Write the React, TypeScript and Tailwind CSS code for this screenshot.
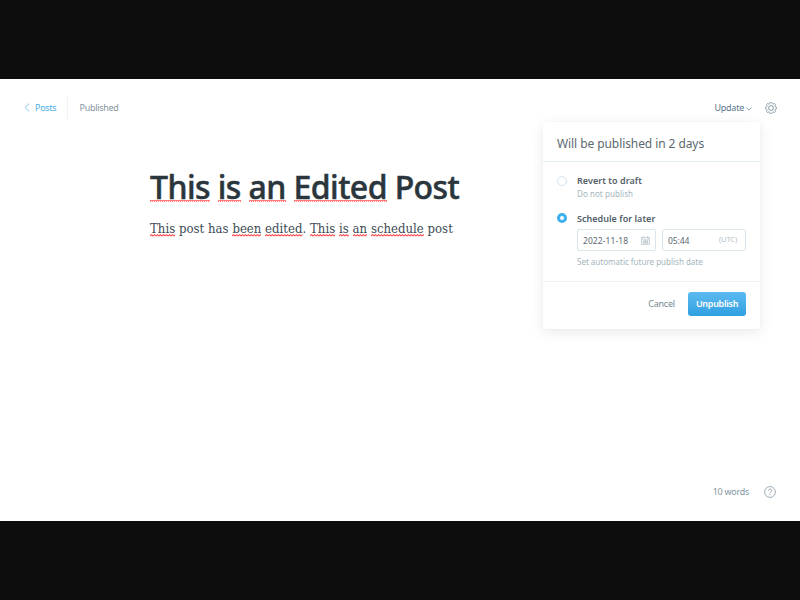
import type { ReactNode } from "react";

const UI = "font-['Noto_Sans','Open_Sans',sans-serif]";

/** A word flagged by the browser's spell checker. */
function Flagged({ children, id, heading = false }: { children: ReactNode; id: string; heading?: boolean }) {
  return (
    <span className="relative inline-block">
      {children}
      <svg className={heading ? "absolute left-0 top-[34px] h-[2px] w-full" : "absolute left-0 top-[15px] h-[3px] w-full"}>
        <defs>
          <pattern id={id} width={heading ? 2 : 3} height="3" patternUnits="userSpaceOnUse">
            {heading ? (
              <path d="M0 .5h2M0 1.5h1" stroke="#ff7b7b" strokeWidth="1" />
            ) : (
              <path d="M0 2 1.5 .7 3 2" fill="none" stroke="#fa4a4a" strokeWidth="1.1" />
            )}
          </pattern>
        </defs>
        <rect width="100%" height="3" fill={`url(#${id})`} />
      </svg>
    </span>
  );
}

function Gear() {
  const teeth = Array.from({ length: 96 }, (_, i) => {
    const a = (i / 96) * Math.PI * 2;
    const r = 5.1 + 0.6 * Math.tanh(3 * Math.cos(a * 8));
    return `${(6 + r * Math.cos(a)).toFixed(2)},${(6 + r * Math.sin(a)).toFixed(2)}`;
  }).join(" ");
  return (
    <svg className="h-3 w-3" viewBox="0 0 12 12" fill="none" stroke="#738a94" strokeWidth=".85">
      <polygon points={teeth} />
      <circle cx="6" cy="6" r="2.4" />
    </svg>
  );
}

function Toolbar() {
  return (
    <header className="flex h-[57px] items-center pl-[24px] pr-[23px] text-[9px] leading-[12px]">
      <svg className="h-[9px] w-[6px]" viewBox="0 0 6 9" fill="none" stroke="#79c3f0" strokeWidth=".9">
        <path d="M5.2.5 1 4.5l4.2 4" />
      </svg>
      <span className="ml-[5px] w-[32px] whitespace-nowrap tracking-[-0.3px] text-[#4baee8]">Posts</span>
      <span className="h-[25px] w-px bg-[#f1f3f4]" />
      <span className="ml-[11.5px] whitespace-nowrap tracking-[-0.29px] text-[#85969e]">Published</span>
      <span className="ml-auto whitespace-nowrap tracking-[-0.25px] text-[#587889]">Update</span>
      <svg className="ml-[2px] mt-[2px] h-[4px] w-[6px]" viewBox="0 0 6 4" fill="none" stroke="#738a94" strokeWidth=".8">
        <path d="m.4.5 2.6 2.6L5.6.5" />
      </svg>
      <span className="ml-[13px]"><Gear /></span>
    </header>
  );
}

function Popup() {
  return (
    <section className="absolute left-[543px] top-[43px] h-[207px] w-[217px] rounded-[3px] bg-white shadow-[0_0_2px_rgba(0,0,0,0.04),0_3px_14px_rgba(0,0,0,0.09)]">
      <h2 className="h-[40px] whitespace-nowrap border-b border-[#e6eff4] pl-[14px] pt-[14px] text-[12px] leading-[16px] tracking-[-0.08px] text-[#5d6970]">
        Will be published in 2 days
      </h2>
      <div className="flex h-[120px] flex-col border-b border-[#edf2f5] pl-[14px] pt-[13px]">
        <div className="flex h-[38px]">
          <span className="mt-px h-[10px] w-[10px] rounded-full border border-[#d5e4ee]" />
          <div className="ml-[10px]">
            <p className="text-[9px] font-semibold leading-[12px] tracking-[0.05px] text-[#526069]">Revert to draft</p>
            <p className="mt-px text-[8px] leading-[12px] tracking-[0.06px] text-[#a5b5bd]">Do not publish</p>
          </div>
        </div>
        <div className="flex">
          <span className="h-[10px] w-[10px] rounded-full border-[3px] border-[#3eb0ef]" />
          <div className="ml-[10px]">
            <p className="text-[9px] font-semibold leading-[12px] tracking-[0.03px] text-[#526069]">Schedule for later</p>
            <div className="mt-[4px] flex gap-[6px]">
              <div className="flex h-[22px] w-[79px] items-center justify-between rounded-[2px] border border-[#dbe6ed] px-[5px] text-[8.5px] text-[#5d6970]">
                <span className="whitespace-nowrap pt-[2px] tracking-[0.07px]">2022-11-18</span>
                <svg className="h-[9px] w-[9px]" viewBox="0 0 9 9" fill="none" stroke="#b4c1c7" strokeWidth=".7">
                  <path d="M.5 1.5h8v7h-8zM.5 3.2h8M2.3 0v2M6.7 0v2M2.7 4v4M4.5 4v4M6.3 4v4M1.5 5.1h6M1.5 6.8h6" />
                </svg>
              </div>
              <div className="flex h-[22px] w-[84px] items-center justify-between rounded-[2px] border border-[#dbe6ed] pl-[5px] pr-[8px] text-[8.5px] text-[#5d6970]">
                <span className="pt-[2px] tracking-[-0.1px]">05:44</span>
                <span className="text-[7.5px] tracking-[-0.15px] text-[#b4c1c7]">(UTC)</span>
              </div>
            </div>
            <p className="mt-[5px] whitespace-nowrap text-[8px] leading-[12px] text-[#a5b5bd]">Set automatic future publish date</p>
          </div>
        </div>
      </div>
      <footer className="flex h-[44px] items-center justify-end gap-[13px] pr-[14px] text-[9px] leading-[12px]">
        <button className="whitespace-nowrap tracking-[-0.2px] text-[#738a94]">Cancel</button>
        <button className="-mt-px h-[24px] w-[58px] rounded-[3px] bg-gradient-to-b from-[#5bbbf1] to-[#2f9fe0] pt-px text-center font-semibold tracking-[-0.28px] text-white">
          Unpublish
        </button>
      </footer>
    </section>
  );
}

export default function App() {
  return (
    <div className={`flex h-[600px] w-[800px] flex-col overflow-hidden bg-[#0d0d0d] pt-[79px] ${UI}`}>
      <main className="relative flex h-[442px] flex-col bg-white">
        <Toolbar />
        <article className="flex-1 pl-[150px] pt-[30px]">
          <h1 className="h-[42px] whitespace-nowrap text-[32px] font-medium leading-[42px] tracking-[-0.57px] text-[#2b363c] [-webkit-text-stroke:0.5px_#2b363c]">
            <Flagged heading id="h1">This</Flagged> <Flagged heading id="h2">is</Flagged>{" "}
            <Flagged heading id="h3">an</Flagged> <Flagged heading id="h4">Edited</Flagged> Post
          </h1>
          <p className="mt-[11px] whitespace-nowrap font-['DejaVu_Serif_Condensed','DejaVu_Serif',serif] text-[13px] leading-[20px] tracking-[0.03px] text-[#3d4b54]">
            <Flagged id="p1">This</Flagged> post has <Flagged id="p2">been</Flagged> <Flagged id="p3">edited</Flagged>.{" "}
            <Flagged id="p4">This</Flagged> <Flagged id="p5">is</Flagged> <Flagged id="p6">an</Flagged>{" "}
            <Flagged id="p7">schedule</Flagged> post
          </p>
        </article>
        <footer className="flex h-[59px] items-center justify-end gap-[15px] pr-[24px] text-[9px] leading-[12px] text-[#85969e]">
          <span className="tracking-[-0.28px]">10 words</span>
          <svg className="h-[12px] w-[12px]" viewBox="0 0 12 12" fill="none" stroke="#8699a3" strokeWidth=".8">
            <circle cx="6" cy="6" r="5.4" />
            <path d="M4.3 4.8c0-2.3 3.5-2.2 3.5 0C7.8 6 6 6 6 7.4M6 8.2v1" />
          </svg>
        </footer>
        <Popup />
      </main>
    </div>
  );
}
